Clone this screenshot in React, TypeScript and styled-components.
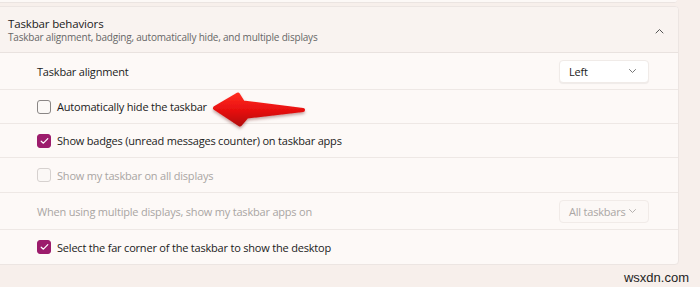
import React from 'react';
import styled, { createGlobalStyle } from 'styled-components';

const GlobalStyle = createGlobalStyle`
  html, body {
    margin: 0;
    padding: 0;
    background: #f7efeb;
  }
  body {
    font-family: "Open Sans", "Noto Sans", sans-serif;
    color: #1b1b1b;
  }
`;

const Page = styled.div`
  position: relative;
  width: 700px;
  height: 287px;
  overflow: hidden;
  background: #f7efeb;
`;

const PrevCardEdge = styled.div`
  width: 681px;
  margin-left: -4px;
  height: 2px;
  background: #fcf8f6;
  border-bottom: 1px solid #ebe4e1;
  border-radius: 0 0 4px 0;
`;

const Card = styled.div`
  width: 681px;
  margin-left: -4px;
  margin-top: 3px;
  border: 1px solid #ece5e2;
  border-radius: 4px;
  background: #fdf9f7;
  overflow: hidden;
`;

const Header = styled.div`
  box-sizing: border-box;
  display: flex;
  align-items: center;
  justify-content: space-between;
  height: 46px;
  padding: 2px 14px 0 11px;
  background: #f9f3f0;
  border-bottom: 1px solid #e9e2df;
`;

const HeaderText = styled.div`
  display: flex;
  flex-direction: column;
`;

const Title = styled.div`
  font-size: 11.5px;
  letter-spacing: -0.15px;
  color: #1b1b1b;
  line-height: 14px;
`;

const Subtitle = styled.div`
  font-size: 10px;
  letter-spacing: -0.2px;
  color: #676767;
  line-height: 13px;
`;

const Row = styled.div<{ $h: number }>`
  box-sizing: border-box;
  display: flex;
  align-items: center;
  justify-content: space-between;
  height: ${(p) => p.$h}px;
  padding: 0 29px 0 40px;
  border-bottom: 1px solid #eee8e5;
  &:last-child {
    border-bottom: none;
  }
`;

const Label = styled.label<{ $disabled?: boolean }>`
  display: flex;
  align-items: center;
  gap: 6px;
  font-size: 11px;
  letter-spacing: -0.2px;
  white-space: nowrap;
  color: ${(p) => (p.$disabled ? '#a9a5a3' : '#1b1b1b')};
`;

const Box = styled.span<{ $checked?: boolean; $disabled?: boolean }>`
  box-sizing: border-box;
  display: inline-flex;
  align-items: center;
  justify-content: center;
  width: 14px;
  height: 14px;
  border-radius: 3px;
  border: 1px solid
    ${(p) => (p.$checked ? '#9c1c6c' : p.$disabled ? '#d6d1cf' : '#8a8685')};
  background: ${(p) => (p.$checked ? '#9c1c6c' : '#fbf8f6')};
`;

const Select = styled.div<{ $disabled?: boolean }>`
  box-sizing: border-box;
  display: flex;
  align-items: center;
  justify-content: space-between;
  width: 90px;
  height: 23px;
  padding: 0 11px 0 9px;
  border-radius: 4px;
  font-size: 11px;
  letter-spacing: -0.2px;
  white-space: nowrap;
  color: ${(p) => (p.$disabled ? '#aaa6a4' : '#1b1b1b')};
  background: ${(p) => (p.$disabled ? '#fcf8f6' : '#ffffff')};
  border: 1px solid ${(p) => (p.$disabled ? '#f1ebe8' : '#f0ebe8')};
  box-shadow: ${(p) => (p.$disabled ? 'none' : '0 1px 1px rgba(0,0,0,0.06)')};
`;

const ArrowOverlay = styled.svg`
  position: absolute;
  left: 205px;
  top: 88px;
  overflow: visible;
`;

const Watermark = styled.div`
  position: absolute;
  right: 11px;
  bottom: 2px;
  font-family: "Liberation Sans", Arial, sans-serif;
  font-size: 13px;
  color: #1e1e1e;
`;

const Chevron = ({ up, color }: { up?: boolean; color: string }) => (
  <svg width="9" height="6" viewBox="0 0 9 6">
    <polyline
      points={up ? '1,5 4.5,1.5 8,5' : '1.5,1.5 4.5,4.5 7.5,1.5'}
      fill="none"
      stroke={color}
      strokeWidth="1"
      strokeLinecap="round"
      strokeLinejoin="round"
    />
  </svg>
);

const Check = ({ checked = false, disabled = false }) => (
  <Box $checked={checked} $disabled={disabled}>
    {checked && (
      <svg width="9" height="8" viewBox="0 0 9 8">
        <polyline points="1.2,4.2 3.4,6.2 7.8,1.6" fill="none" stroke="#fff" strokeWidth="1.2" strokeLinecap="round" strokeLinejoin="round" />
      </svg>
    )}
  </Box>
);

const Arrow = () => (
  <ArrowOverlay width="105" height="45" viewBox="0 0 105 45">
    <defs>
      <linearGradient id="arrowFill" x1="0" y1="0" x2="0" y2="1">
        <stop offset="0" stopColor="#ff2a1f" />
        <stop offset="0.55" stopColor="#e60f0f" />
        <stop offset="1" stopColor="#b80808" />
      </linearGradient>
      <filter id="arrowShadow" x="-20%" y="-30%" width="140%" height="170%">
        <feDropShadow dx="0" dy="2" stdDeviation="1.5" floodColor="#5a0000" floodOpacity="0.35" />
      </filter>
    </defs>
    <path
      d="M10,20 L33,6.5 L38,14.5 L98,22 L42,28.5 L35,36.5 Z"
      fill="url(#arrowFill)"
      stroke="url(#arrowFill)"
      strokeWidth="4"
      strokeLinejoin="round"
      filter="url(#arrowShadow)"
    />
  </ArrowOverlay>
);

export default function App() {
  return (
    <Page>
      <GlobalStyle />
      <PrevCardEdge />
      <Card>
        <Header>
          <HeaderText>
            <Title>Taskbar behaviors</Title>
            <Subtitle>Taskbar alignment, badging, automatically hide, and multiple displays</Subtitle>
          </HeaderText>
          <Chevron up color="#555" />
        </Header>
        <Row $h={37}>
          <Label>Taskbar alignment</Label>
          <Select>
            Left
            <Chevron color="#777" />
          </Select>
        </Row>
        <Row $h={34}>
          <Label>
            <Check />
            Automatically hide the taskbar
          </Label>
        </Row>
        <Row $h={34}>
          <Label>
            <Check checked />
            Show badges (unread messages counter) on taskbar apps
          </Label>
        </Row>
        <Row $h={35}>
          <Label $disabled>
            <Check disabled />
            Show my taskbar on all displays
          </Label>
        </Row>
        <Row $h={37}>
          <Label $disabled>When using multiple displays, show my taskbar apps on</Label>
          <Select $disabled>
            All taskbars
            <Chevron color="#b5b1af" />
          </Select>
        </Row>
        <Row $h={34}>
          <Label>
            <Check checked />
            Select the far corner of the taskbar to show the desktop
          </Label>
        </Row>
      </Card>
      <Arrow />
      <Watermark>wsxdn.com</Watermark>
    </Page>
  );
}
